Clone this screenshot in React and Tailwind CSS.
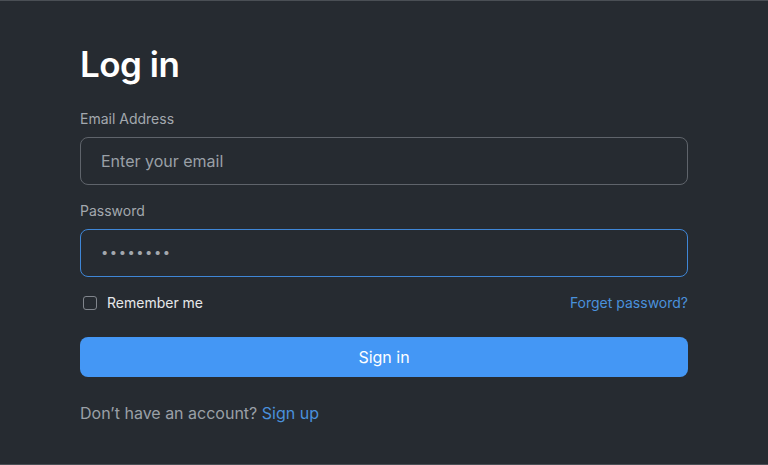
import { useState } from 'react';

const App = () => {
  const [remember, setRemember] = useState(false);

  return (
    <div
      className="w-[768px] h-[465px] bg-[#262b31] border-y border-[#4a4f55] flex flex-col px-20 pt-[41px]"
      style={{ fontFamily: 'Inter, "Noto Sans", sans-serif' }}
    >
      {/* Heading */}
      <h1 className="text-[35px] leading-[44px] font-semibold text-white tracking-[-0.5px]">Log in</h1>

      {/* Email */}
      <label className="mt-[23px] text-sm leading-5 text-[#a3a8ae]">Email Address</label>
      <div className="mt-[8px] h-[48px] rounded-lg border border-[#5f646b] flex items-center px-5">
        <span className="text-base text-[#9aa0a7]">Enter your email</span>
      </div>

      {/* Password */}
      <label className="mt-[16px] text-sm leading-5 text-[#a3a8ae]">Password</label>
      <div className="mt-[8px] h-[48px] rounded-lg border border-[#3f86d6] flex items-center px-5">
        <span className="text-[#a3a8ae] text-[13px] tracking-[1.5px]">••••••••</span>
      </div>

      {/* Remember row */}
      <div className="mt-[16px] flex items-center justify-between h-5">
        <button onClick={() => setRemember(!remember)} className="flex items-center gap-2.5 pl-[3px]">
          <span className="w-[14px] h-[14px] rounded-[3px] border border-[#80858c]" />
          <span className="text-sm text-[#e6e8ea]">Remember me</span>
        </button>
        <a className="text-sm text-[#4a91dc]">Forget password?</a>
      </div>

      {/* Submit */}
      <button className="mt-[24px] h-10 rounded-lg bg-[#4497f5] text-white text-base">Sign in</button>

      {/* Footer */}
      <p className="mt-[24px] text-base text-[#9aa0a7]">
        Don’t have an account? <a className="text-[#4a91dc]">Sign up</a>
      </p>
    </div>
  );
};

export default App;
